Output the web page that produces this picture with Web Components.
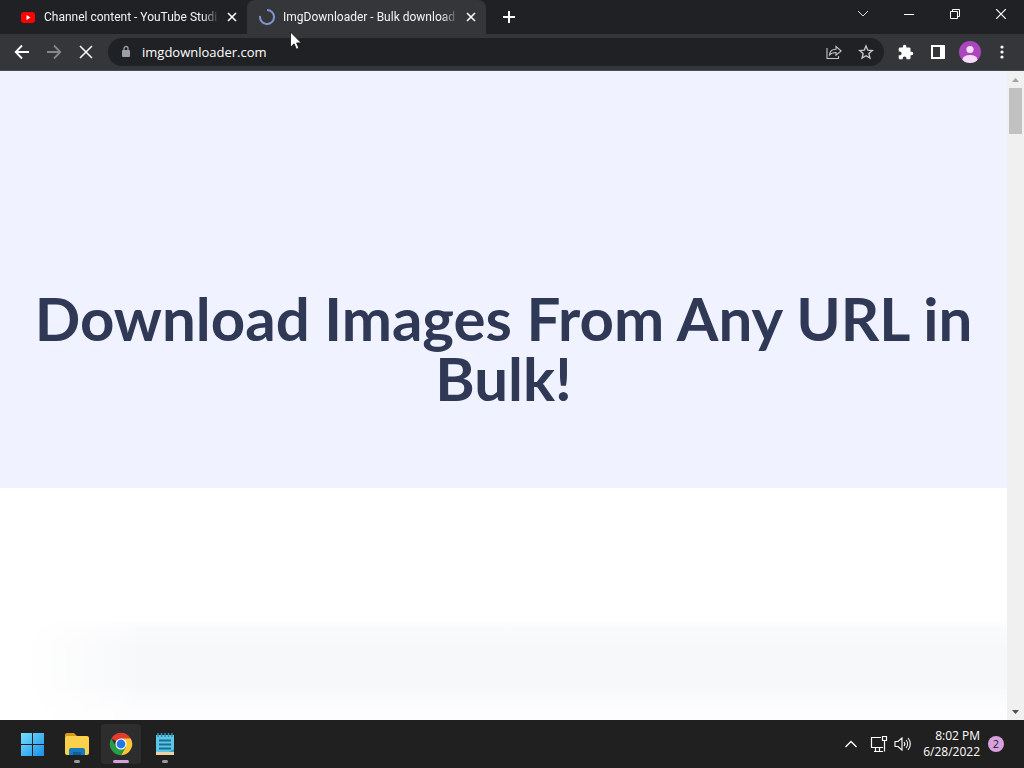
<!DOCTYPE html>
<html lang="en">
<head>
<meta charset="utf-8">
<title>ImgDownloader - Bulk download</title>
<style>
  html, body { height: 100%; margin: 0; }
  body { font-family: "Open Sans", "Noto Sans", sans-serif; font-size: 12px; }
</style>
</head>
<body>
<desktop-shell>
  <tab-strip slot="window">
    <browser-tab label="Channel content - YouTube Studi">
      <svg slot="icon" width="16" height="16" viewBox="0 0 16 16"><rect x="1" y="3" width="14" height="11" rx="3" fill="#f00"/><path d="M6.500 6v5l4-2.500z" fill="#fff"/></svg>
    </browser-tab>
    <browser-tab active label="ImgDownloader - Bulk download">
      <svg slot="icon" width="16" height="16" viewBox="0 0 16 16"><path d="M8 1a7 7 0 1 1-6.900 6" fill="none" stroke="#8194cf" stroke-width="2"/></svg>
    </browser-tab>
  </tab-strip>
  <tool-bar slot="window" url="imgdownloader.com"></tool-bar>
  <page-view slot="window">
    <hero-banner>Download Images From Any URL in Bulk!</hero-banner>
    <soft-panel></soft-panel>
  </page-view>
  <task-bar slot="taskbar" time="8:02 PM" date="6/28/2022" count="2"></task-bar>
  <mouse-pointer slot="pointer"></mouse-pointer>
</desktop-shell>

<script>
const define = (name, html, setup) => {
  const template = document.createElement('template');
  template.innerHTML = html;
  customElements.define(name, class extends HTMLElement {
    constructor() {
      super();
      this.attachShadow({ mode: 'open' }).append(template.content.cloneNode(true));
    }
    connectedCallback() { if (setup) setup(this, this.shadowRoot); }
  });
};

define('desktop-shell', `
<style>
  :host { display: flex; flex-direction: column; height: 100vh; overflow: hidden; position: relative; background: #202020; }
  main { flex: 1; min-height: 0; display: flex; flex-direction: column; }
</style>
<main><slot name="window"></slot></main>
<slot name="taskbar"></slot>
<slot name="pointer"></slot>`);

define('icon-button', `
<style>
  :host { display: inline-flex; color: #fff; }
  button { display: grid; place-items: center; flex: 1; border: 0; padding: 0; margin: 0; background: none; color: inherit; font: inherit; }
</style>
<button type="button"><slot></slot></button>`, (el, root) => {
  root.querySelector('button').setAttribute('aria-label', el.getAttribute('label') || '');
});

define('browser-tab', `
<style>
  :host { display: flex; align-items: center; box-sizing: border-box; flex: 0 1 239px; min-width: 0; height: 34px; padding: 0 7px 0 12px; color: #f1f3f4; }
  :host([active]) { background: #35363a; border-radius: 8px 8px 0 0; }
  a { flex: 1; min-width: 0; margin: 0 4px 0 8px; overflow: hidden; white-space: nowrap; font: 12px/18px Roboto, "Open Sans", sans-serif; color: inherit; text-decoration: none;
      mask-image: linear-gradient(to right, #000 90%, transparent); }
  icon-button { width: 16px; height: 16px; }
</style>
<slot name="icon"></slot>
<a href="#"></a>
<icon-button label="Close tab"><svg width="16" height="16" viewBox="0 0 16 16"><path d="M4 4l8 8M12 4l-8 8" stroke="#fff" stroke-width="1.600"/></svg></icon-button>`,
(el, root) => { root.querySelector('a').textContent = el.getAttribute('label'); });

define('tab-strip', `
<style>
  :host { display: flex; background: #202124; height: 34px; padding-left: 8px; }
  .tabs { display: flex; flex: 1; min-width: 0; }
  .new { width: 28px; margin-left: 9px; }
  .controls { display: flex; height: 28px; }
  .controls icon-button { width: 46px; }
</style>
<div class="tabs"><slot></slot>
  <icon-button class="new" label="New tab"><svg width="16" height="16" viewBox="0 0 16 16"><path d="M8 2v12M2 8h12" stroke="#fff" stroke-width="2"/></svg></icon-button>
</div>
<div class="controls">
  <icon-button label="Search tabs"><svg width="12" height="12" viewBox="0 0 12 12"><path d="M1 3l5 5 5-5" fill="none" stroke="#ddd"/></svg></icon-button>
  <icon-button label="Minimize"><svg width="10" height="10" viewBox="0 0 10 10"><path d="M0 5.500h10" stroke="#fff"/></svg></icon-button>
  <icon-button label="Restore"><svg width="10" height="10" viewBox="0 0 10 10"><path d="M.5 2.500h7v7h-7zM2.500 2.500v-2h7v7h-2" fill="none" stroke="#fff"/></svg></icon-button>
  <icon-button label="Close"><svg width="10" height="10" viewBox="0 0 10 10"><path d="M0 0l10 10M10 0L0 10" stroke="#fff" stroke-width="1.200"/></svg></icon-button>
</div>`);

define('tool-bar', `
<style>
  :host { display: flex; align-items: center; height: 36px; padding: 0 6px; background: #35363a; border-bottom: 1px solid #4a4b50; }
  icon-button { width: 32px; height: 28px; }
  .dim { color: #85878a; }
  .box { display: flex; align-items: center; flex: 1; min-width: 0; height: 28px; margin: 0 6px; padding: 0 2px; border-radius: 14px; background: #202124; color: #bdc1c6; }
  .box icon-button { color: #c4c7cb; }
  input { flex: 1; min-width: 0; height: 24px; border: 0; padding: 0; outline: 0; background: none; color: #fff; font: 13px/20px "Open Sans", "Noto Sans", sans-serif; }
</style>
<icon-button label="Back"><svg width="16" height="16" viewBox="0 0 16 16"><path d="M15 8H2M8 1.500L1.700 8 8 14.500" fill="none" stroke="currentColor" stroke-width="1.800"/></svg></icon-button>
<icon-button class="dim" label="Forward"><svg width="16" height="16" viewBox="0 0 16 16"><path d="M1 8h13M8 1.500L14.300 8 8 14.500" fill="none" stroke="currentColor" stroke-width="1.800"/></svg></icon-button>
<icon-button label="Stop"><svg width="16" height="16" viewBox="0 0 16 16"><path d="M2 2l12 12M14 2L2 14" stroke="currentColor" stroke-width="1.500"/></svg></icon-button>
<div class="box">
  <icon-button label="Site information"><svg width="12" height="14" viewBox="0 0 12 14"><rect x="2" y="5" width="8" height="7" rx="1" fill="#9aa0a6"/><path d="M4 5V3.500a2 2 0 0 1 4 0V5" fill="none" stroke="#9aa0a6" stroke-width="1.300"/></svg></icon-button>
  <input type="text" aria-label="Address and search bar">
  <icon-button label="Share"><svg width="16" height="16" viewBox="0 0 16 16"><path d="M1 4v10.500h11.500V12M3.500 11c.3-4 2.700-5.700 6.500-5.700V2.500L15.200 7 10 11.200V8.500C7 8.500 5 9.200 3.500 11z" fill="none" stroke="currentColor" stroke-width="1.100"/></svg></icon-button>
  <icon-button label="Bookmark"><svg width="16" height="16" viewBox="0 0 16 16"><path d="M8 2l1.800 4.200 4.500.4-3.400 3 1 4.400L8 11.700 4.100 14l1-4.400-3.400-3 4.500-.4z" fill="none" stroke="currentColor" stroke-width="1.400"/></svg></icon-button>
</div>
<icon-button label="Extensions"><svg width="16" height="16" viewBox="1 0 23 23"><path d="M20.500 11H19V7a2 2 0 0 0-2-2h-4V3.500a2.500 2.500 0 0 0-5 0V5H4a2 2 0 0 0-2 2v3.800h1.500a2.700 2.700 0 0 1 0 5.400H2V20c0 1.100.9 2 2 2h3.800v-1.500a2.700 2.700 0 0 1 5.400 0V22H17a2 2 0 0 0 2-2v-4h1.500a2.500 2.500 0 0 0 0-5z" fill="currentColor"/></svg></icon-button>
<icon-button label="Side panel"><svg width="14" height="14" viewBox="0 0 14 14"><path fill-rule="evenodd" d="M0 0h14v14H0zM2 2v10h7V2z" fill="currentColor"/></svg></icon-button>
<icon-button label="Profile"><svg width="22" height="22" viewBox="0 0 22 22"><clipPath id="c"><circle cx="11" cy="11" r="11"/></clipPath><g clip-path="url(#c)"><path d="M0 0h22v22H0z" fill="#ab47bc"/><circle cx="11" cy="8.500" r="3.600" fill="#f6dcfa"/><ellipse cx="11" cy="18.500" rx="7.500" ry="4.600" fill="#f6dcfa"/></g></svg></icon-button>
<icon-button label="Menu"><svg width="4" height="14" viewBox="0 0 4 14"><g fill="currentColor"><circle cx="2" cy="2" r="1.600"/><circle cx="2" cy="7" r="1.600"/><circle cx="2" cy="12" r="1.600"/></g></svg></icon-button>`,
(el, root) => { root.querySelector('input').value = el.getAttribute('url'); });

define('scroll-rail', `
<style>
  :host { display: flex; flex-direction: column; align-items: center; width: 17px; background: #f0f0f1; }
  icon-button { width: 17px; height: 17px; }
  .thumb { width: 13px; height: 46px; background: #c1c1c2; }
  .track { flex: 1; }
</style>
<icon-button label="Scroll up"><svg width="7" height="4" viewBox="0 0 7 4"><path d="M0 4l3.500-4L7 4z" fill="#a3a3a3"/></svg></icon-button>
<div class="thumb"></div><div class="track"></div>
<icon-button label="Scroll down"><svg width="7" height="4" viewBox="0 0 7 4"><path d="M0 0l3.500 4L7 0z" fill="#505050"/></svg></icon-button>`);

define('page-view', `
<style>
  :host { display: flex; flex: 1; min-height: 0; background: #fff; }
  section { display: flex; flex-direction: column; flex: 1; min-width: 0; overflow: hidden; }
</style>
<section><slot></slot></section><scroll-rail></scroll-rail>`);

define('hero-banner', `
<style>
  :host { display: block; padding: 217px 16px 80px; background: #f0f3ff; }
  h1 { margin: 0; font: 700 60px/60px Lato, "Open Sans", sans-serif; color: #2f3855; text-align: center; }
</style>
<h1><slot></slot></h1>`);

define('soft-panel', `
<style>
  :host { display: flex; flex-direction: column; flex: 1; padding-top: 132px; }
  div { flex: 1; background: linear-gradient(#fff, #fafbfc 8px, #f7f8fa 26px, #f7f8fa 66px, #fafbfc 76px, #fdfdfe 94px);
        mask-image: linear-gradient(to right, transparent 24px, #000 145px); }
</style>
<div></div>`);

define('task-bar', `
<style>
  :host { display: flex; align-items: center; justify-content: space-between; height: 48px; padding: 0 20px 0 13px; background: #202020; color: #fff; }
  nav, aside { display: flex; align-items: center; }
  nav { gap: 4px; }
  nav icon-button { position: relative; width: 40px; height: 40px; border-radius: 4px; }
  .active { background: #2d2d2d; }
  .running::after { content: ""; position: absolute; left: 17px; bottom: 1px; width: 6px; height: 3px; border-radius: 2px; background: #9a9a9a; }
  .active::after { left: 12px; width: 16px; background: #d3a1dc; }
  aside icon-button { width: 24px; height: 32px; }
  .chevron { margin-right: 4px; }
  time { margin: 0 8px; text-align: right; line-height: 16px; white-space: nowrap; }
  time span { display: block; }
  .badge { display: grid; place-items: center; width: 16px; height: 16px; border-radius: 50%; background: #d8a0df; color: #222; font-size: 11px; line-height: 16px; }
</style>
<nav aria-label="Taskbar">
  <icon-button label="Start"><svg width="24" height="24" viewBox="0 0 24 24"><defs><linearGradient id="w" x2="24" y2="24" gradientUnits="userSpaceOnUse"><stop stop-color="#79e1fb"/><stop offset="1" stop-color="#168ee8"/></linearGradient></defs><path d="M0 1h11v11H0zM12 1h11v11H12zM0 13h11v11H0zM12 13h11v11H12z" fill="url(#w)"/></svg></icon-button>
  <icon-button class="running" label="File Explorer"><svg width="26" height="24" viewBox="0 0 26 24"><path d="M1 3a2 2 0 0 1 2-2h7l3 3v5H1z" fill="#d99a16"/><rect x="1" y="4" width="24" height="19" rx="2" fill="#fbd04b"/><path d="M5 23v-5a2 2 0 0 1 2-2h12a2 2 0 0 1 2 2v5z" fill="#1779be"/><path d="M9 23v-3h8v3z" fill="#0c5f9e"/></svg></icon-button>
  <icon-button class="running active" label="Google Chrome"><svg width="24" height="24" viewBox="0 0 24 24"><path d="M12 12L2.300 6.400A11.200 11.200 0 0 1 21.700 6.400z" fill="#e33b2e"/><path d="M12 6.400h9.700A11.200 11.200 0 0 1 12 23.200l4.900-8.400z" fill="#fcc934"/><path d="M2.300 6.400A11.200 11.200 0 0 0 12 23.200l4.900-8.400H7.100z" fill="#299c48"/><circle cx="12" cy="12" r="5.600" fill="#fff"/><circle cx="12" cy="12" r="4.400" fill="#2476e8"/></svg></icon-button>
  <icon-button class="running" label="Notepad"><svg width="20" height="24" viewBox="0 0 20 24"><path d="M1 3h18v19H1z" fill="#5ec6e4"/><path d="M1 20h18v3H1z" fill="#ecd2a2"/><path d="M1 20h13l5-3v3z" fill="#36a0c4"/><path d="M3 1v4M6.500 1v4M10 1v4M13.500 1v4M17 1v4" stroke="#2c95b6" stroke-width="1.500"/><path d="M4 8.500h12M4 12.500h12M4 16.500h12" stroke="#176e91" stroke-width="1.800"/></svg></icon-button>
</nav>
<aside>
  <icon-button class="chevron" label="Show hidden icons"><svg width="12" height="8" viewBox="0 0 12 8"><path d="M.5 7L6 1.500 11.500 7" fill="none" stroke="#fff" stroke-width="1.300"/></svg></icon-button>
  <icon-button label="Network"><svg width="18" height="18" viewBox="0 0 18 18"><path d="M11 2.500H1.500v10H13M5.500 12.500v3.500M9.500 12.500V16M4 16.500h9M12.500 1.500h4v4h-4zM14.500 5.500v11" fill="none" stroke="#fff" stroke-width="1.200"/></svg></icon-button>
  <icon-button label="Volume"><svg width="18" height="16" viewBox="0 0 18 16"><path d="M1 5.500h3l4-3.500v12l-4-3.500H1zM10 6a3 3 0 0 1 0 4M12 4a6 6 0 0 1 0 8M14 2a9 9 0 0 1 0 12" fill="none" stroke="#fff" stroke-width="1.100"/></svg></icon-button>
  <time><span class="clock"></span><span class="date"></span></time>
  <div class="badge"></div>
</aside>`, (el, root) => {
  root.querySelector('.clock').textContent = el.getAttribute('time');
  root.querySelector('.date').textContent = el.getAttribute('date');
  root.querySelector('.badge').textContent = el.getAttribute('count');
});

define('mouse-pointer', `
<style>
  :host { position: absolute; left: 290px; top: 31px; width: 12px; height: 19px; pointer-events: none; }
  svg { display: block; }
</style>
<svg width="12" height="19" viewBox="0 0 12 19"><path d="M.5 1v15.200l3.600-3.400 2.300 5.400 2.500-1-2.300-5.300h4.700z" fill="#fff" stroke="#111" stroke-width=".8"/></svg>`);
</script>
</body>
</html>
